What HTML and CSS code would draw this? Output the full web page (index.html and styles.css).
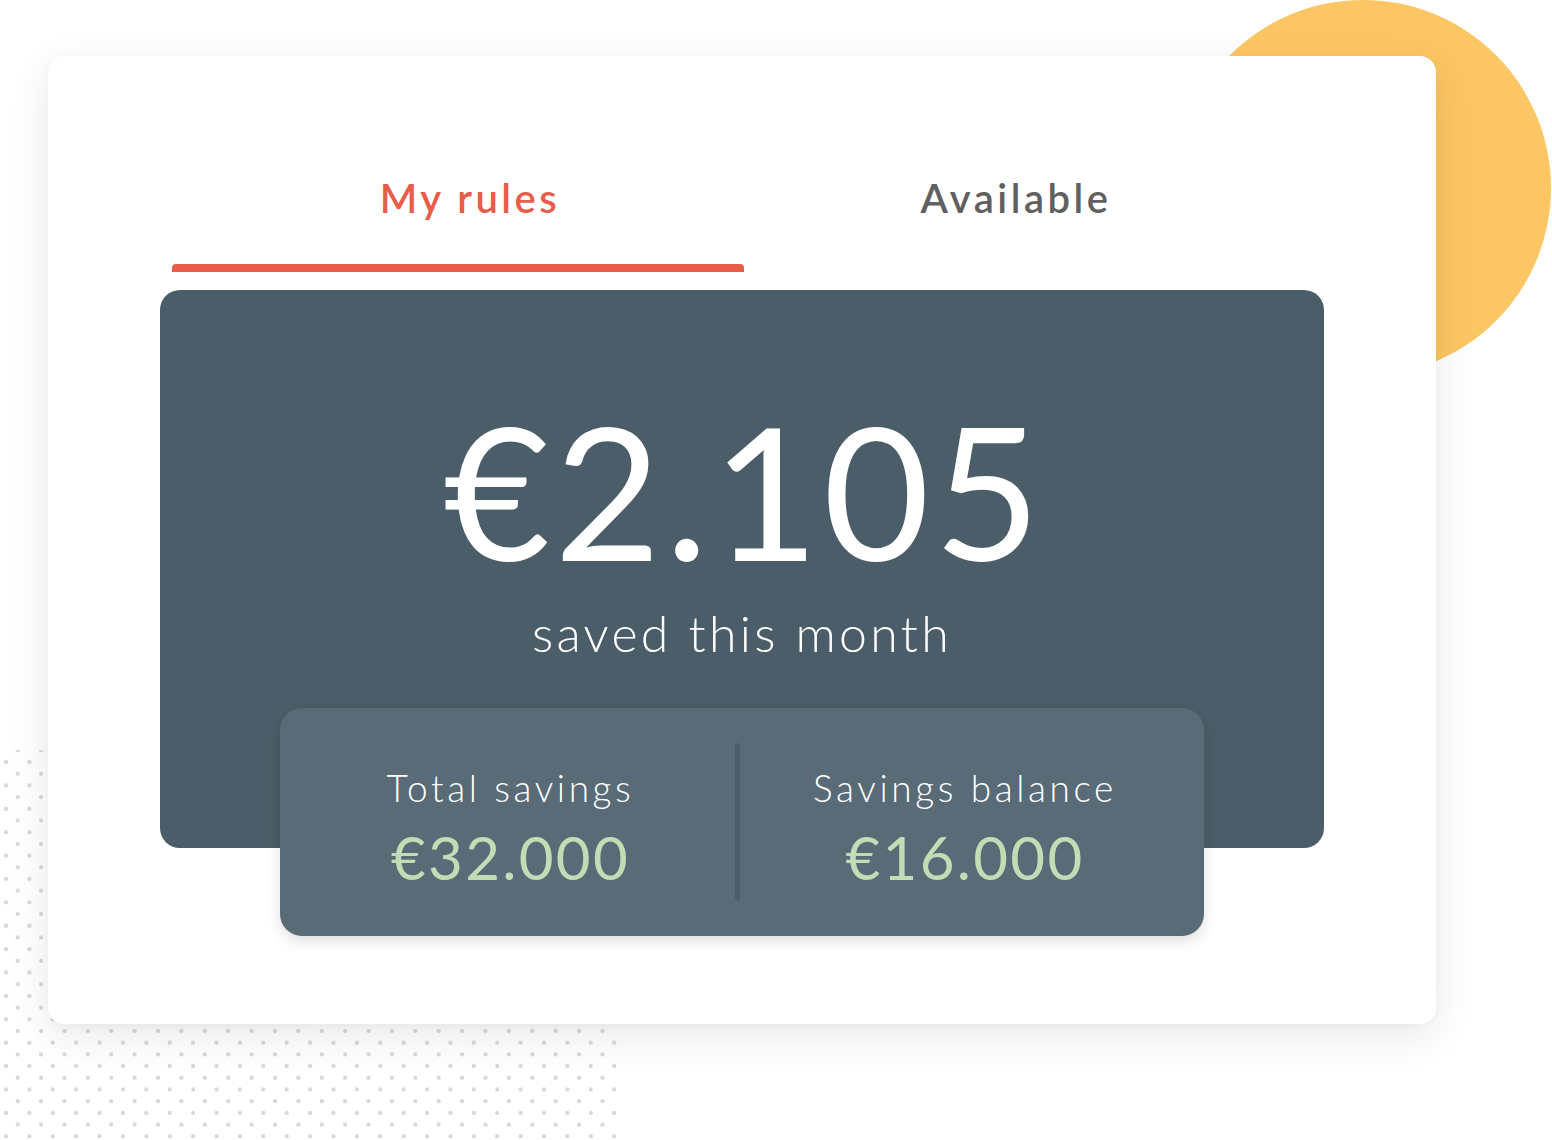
FILE: index.html
```html
<!DOCTYPE html>
<html lang="en">
<head>
<meta charset="utf-8">
<title>Savings rules</title>
<link rel="stylesheet" href="styles.css">
</head>
<body>
<div class="stage">
  <div class="dots" aria-hidden="true"></div>
  <div class="sun" aria-hidden="true"></div>
  <main class="card">
    <nav class="tabs">
      <div class="tab tab-active"><span class="tab-label">My rules</span></div>
      <div class="tab tab-idle"><span class="tab-label">Available</span></div>
    </nav>
    <section class="panel">
      <div class="amount">€2.105</div>
      <div class="amount-caption">saved this month</div>
      <div class="summary">
        <div class="stat stat-left">
          <div class="stat-label">Total savings</div>
          <div class="stat-value">€32.000</div>
        </div>
        <div class="divider"></div>
        <div class="stat stat-right">
          <div class="stat-label">Savings balance</div>
          <div class="stat-value">€16.000</div>
        </div>
      </div>
    </section>
  </main>
</div>
</body>
</html>
```

FILE: styles.css
```css
* { box-sizing: border-box; }

html, body {
  margin: 0;
  padding: 0;
  background: #ffffff;
}

body {
  font-family: "Lato", "Noto Sans", sans-serif;
}

.stage {
  position: relative;
  width: 1552px;
  height: 1140px;
  overflow: hidden;
  padding: 56px 0 0 48px;
}

.dots {
  position: absolute;
  left: 0;
  top: 750px;
  width: 622px;
  height: 390px;
  background-image:
    radial-gradient(circle, #d7d7d7 1.8px, rgba(215,215,215,0) 2.4px),
    radial-gradient(circle, #d7d7d7 1.8px, rgba(215,215,215,0) 2.4px);
  background-size: 23.4px 23.4px, 23.4px 23.4px;
  background-position: -5.7px 0.3px, 6px 12px;
}

.sun {
  position: absolute;
  left: 1175px;
  top: 0;
  width: 376px;
  height: 376px;
  border-radius: 50%;
  background: #fdc664;
}

.card {
  position: relative;
  width: 1388px;
  height: 968px;
  background: #ffffff;
  border-radius: 16px;
  box-shadow: 0 12px 44px rgba(0, 0, 0, 0.09), 0 2px 8px rgba(0, 0, 0, 0.03);
  padding: 122px 112px 0;
}

.tabs {
  display: grid;
  grid-template-columns: 572px 572px;
  margin-left: 12px;
}

.tab {
  display: flex;
  flex-direction: column;
  align-items: center;
  font-size: 40px;
  line-height: 40px;
  font-weight: 600;
  letter-spacing: 3.5px;
}

.tab-active {
  color: #e85c4a;
  padding-left: 24px;
}

.tab-active::after {
  content: "";
  align-self: stretch;
  margin-left: -24px;
  height: 8px;
  margin-top: 46px;
  background: #e85c4a;
  border-radius: 4px 4px 0 0;
}

.tab-idle {
  color: #606060;
  padding-right: 28px;
}

.panel {
  margin-top: 18px;
  background: #4b5d68;
  border-radius: 20px;
  display: flex;
  flex-direction: column;
  align-items: center;
  padding-top: 107px;
  color: #ffffff;
}

.amount {
  font-size: 184px;
  line-height: 186px;
  font-weight: 400;
  letter-spacing: 4px;
  padding-left: 4px;
}

.amount-caption {
  margin-top: 25px;
  font-size: 50px;
  line-height: 50px;
  font-weight: 300;
  letter-spacing: 3.3px;
}

.summary {
  margin-top: 50px;
  margin-bottom: -88px;
  width: 924px;
  height: 228px;
  background: #586b77;
  border-radius: 22px;
  box-shadow: 0 6px 14px rgba(0, 0, 0, 0.12);
  display: grid;
  grid-template-columns: 455px 5px 1fr;
  align-items: stretch;
}

.divider {
  margin: 35px 0;
  background: #4d5f6a;
  border-radius: 3px;
}

.stat {
  display: flex;
  flex-direction: column;
  align-items: center;
  padding-top: 61px;
}

.stat-left {
  padding-left: 6px;
}

.stat-right {
  padding-right: 14px;
}

.stat-label {
  font-size: 37px;
  line-height: 37px;
  font-weight: 300;
  letter-spacing: 3.6px;
}

.stat-value {
  margin-top: 21px;
  font-size: 60px;
  line-height: 60px;
  font-weight: 400;
  color: #c2dcb5;
  letter-spacing: 2.3px;
}
```
